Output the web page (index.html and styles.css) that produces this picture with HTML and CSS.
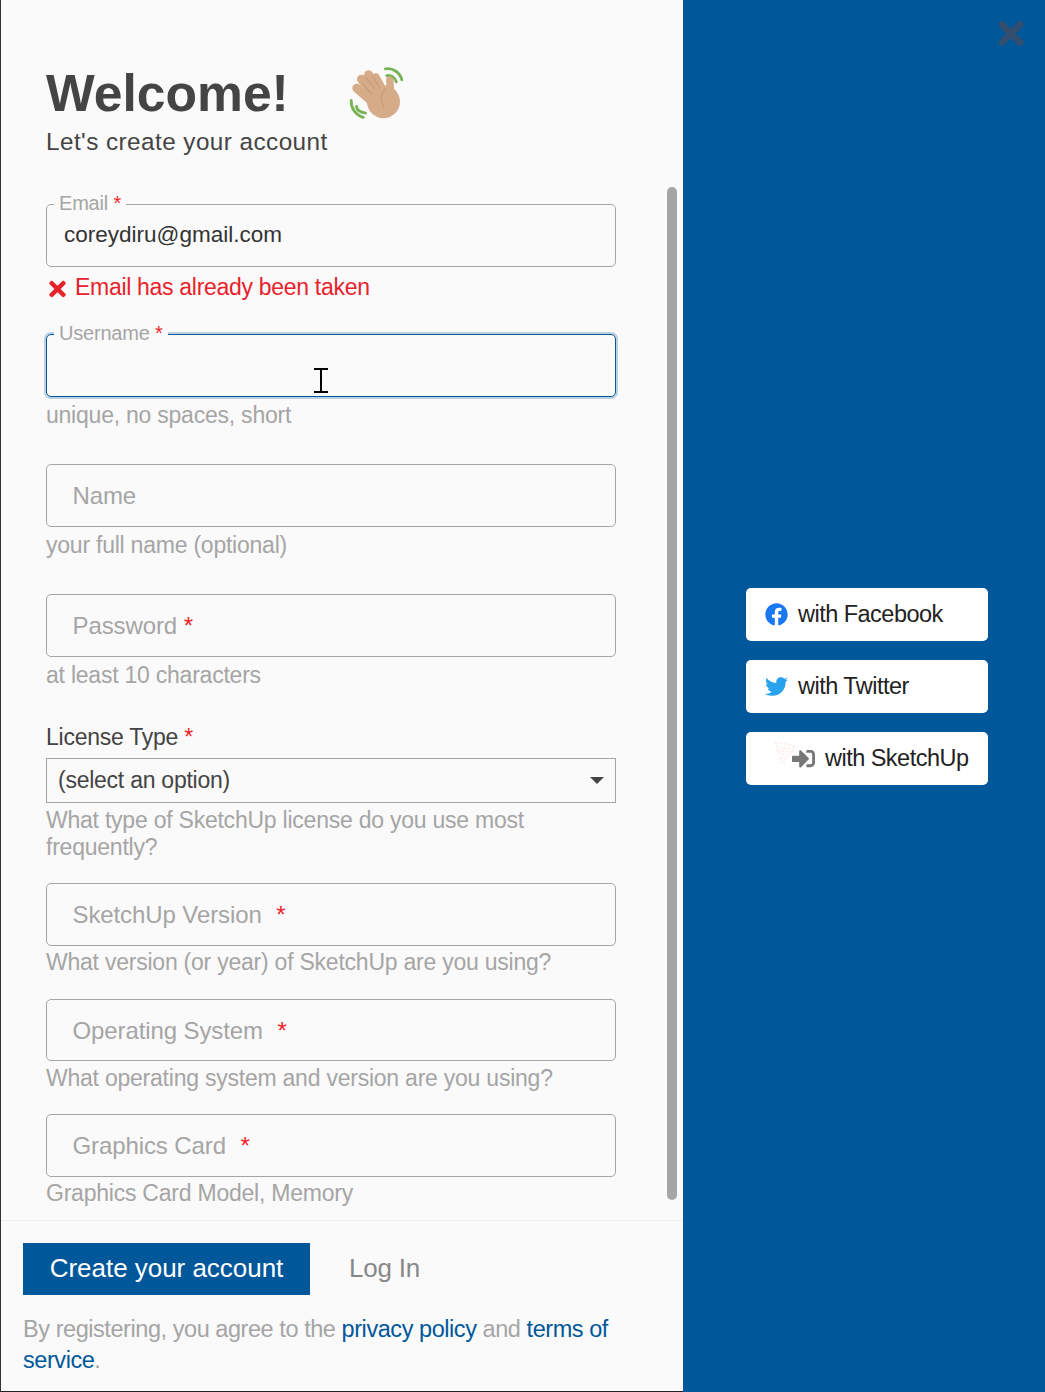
FILE: index.html
```html
<!DOCTYPE html>
<html lang="en">
<head>
<meta charset="utf-8">
<title>Create your account</title>
<link rel="stylesheet" href="styles.css">
</head>
<body>
<div class="modal">
  <section class="left">
    <div class="scroll">
      <div class="head">
        <h1 class="title">Welcome!</h1>
        <svg class="wave" viewBox="0 0 36 36" aria-hidden="true">
          <g fill="none" stroke="#77b255" stroke-width="1.900" stroke-linecap="round">
            <path d="M1.500 23c-.5 4.500 2.500 9.500 8 11.200"/>
            <path d="M5 27c.2 2 1.800 3.800 6 4.400"/>
            <path d="M24.300 1.900c4.800-.9 9.500 2.200 11 7.300"/>
            <path d="M25.200 6.400c2.900-.5 5.300 1.200 6.300 4.200"/>
          </g>
          <g fill="none" stroke="#d5ab88" stroke-linecap="round">
            <path stroke-width="6" d="M17 25L5.200 14.800"/>
            <path stroke-width="6" d="M18 21L8.300 8.800"/>
            <path stroke-width="6" d="M20 19L13 5.800"/>
            <path stroke-width="5.400" d="M23 17L17.800 7.500"/>
            <path stroke-width="5" d="M28 22L27.200 9.500"/>
          </g>
          <circle cx="23" cy="23.800" r="11" fill="#d5ab88"/>
          <g fill="none" stroke="#c49a78" stroke-width=".7" stroke-linecap="round">
            <path d="M24.500 15.500c-3 1.500-4 6.500-1.200 12"/>
            <path d="M8.800 11.500l6 7M11.500 7.800l5.500 7.400M15.800 6.500l4.500 8"/>
          </g>
        </svg>
      </div>
      <p class="subtitle">Let's create your account</p>

      <div class="group group-email">
        <div class="field">
          <label class="legend">Email <span class="req">*</span></label>
          <span class="value">coreydiru@gmail.com</span>
        </div>
        <p class="error">
          <svg class="error-icon" viewBox="0 0 352 512" aria-hidden="true"><path fill="#e8222b" d="M242.720 256l100.070-100.070c12.280-12.280 12.280-32.190 0-44.480l-22.240-22.240c-12.280-12.280-32.190-12.280-44.480 0L176 189.280 75.930 89.210c-12.280-12.280-32.190-12.280-44.480 0L9.210 111.450c-12.280 12.280-12.280 32.190 0 44.480L109.280 256 9.210 356.070c-12.280 12.280-12.280 32.190 0 44.480l22.240 22.240c12.280 12.280 32.200 12.280 44.480 0L176 322.720l100.070 100.070c12.280 12.280 32.200 12.280 44.480 0l22.240-22.240c12.280-12.280 12.280-32.190 0-44.480L242.720 256z"/></svg>
          <span>Email has already been taken</span>
        </p>
      </div>

      <div class="group">
        <div class="field focused">
          <label class="legend">Username <span class="req">*</span></label>
          <svg class="cursor" viewBox="0 0 14 25" aria-hidden="true"><path fill="none" stroke="#000" stroke-width="2" d="M0 1h14M7 1v23M0 24h14"/></svg>
        </div>
        <p class="hint">unique, no spaces, short</p>
      </div>

      <div class="group">
        <div class="field"><span class="placeholder">Name</span></div>
        <p class="hint">your full name (optional)</p>
      </div>

      <div class="group">
        <div class="field"><span class="placeholder">Password <span class="req">*</span></span></div>
        <p class="hint">at least 10 characters</p>
      </div>

      <div class="group-select">
        <p class="select-label">License Type <span class="req">*</span></p>
        <div class="select">
          <span>(select an option)</span>
          <span class="caret"></span>
        </div>
        <p class="hint hint-tight">What type of SketchUp license do you use most frequently?</p>
      </div>

      <div class="group group-short">
        <div class="field"><span class="placeholder">SketchUp Version <span class="req req-wide">*</span></span></div>
        <p class="hint hint-close">What version (or year) of SketchUp are you using?</p>
      </div>

      <div class="group group-short group-os">
        <div class="field field-os"><span class="placeholder">Operating System <span class="req req-wide">*</span></span></div>
        <p class="hint hint-close hint-os">What operating system and version are you using?</p>
      </div>

      <div class="group group-short">
        <div class="field"><span class="placeholder">Graphics Card <span class="req req-wide">*</span></span></div>
        <p class="hint hint-close">Graphics Card Model, Memory</p>
      </div>

      <div class="thumb"></div>
    </div>

    <footer class="foot">
      <div class="actions">
        <button class="primary" type="button">Create your account</button>
        <a class="login" href="#">Log In</a>
      </div>
      <p class="legal"><span>By registering, you agree to the</span> <a href="#">privacy policy</a> <span>and</span> <a href="#">terms of</a> <a href="#">service</a><span>.</span></p>
    </footer>
  </section>

  <aside class="right">
    <svg class="close" viewBox="0 0 352 512" aria-hidden="true"><path fill="#334f70" d="M242.720 256l100.070-100.070c12.280-12.280 12.280-32.190 0-44.480l-22.240-22.240c-12.280-12.280-32.190-12.280-44.480 0L176 189.280 75.930 89.210c-12.280-12.280-32.190-12.280-44.480 0L9.210 111.450c-12.280 12.280-12.280 32.190 0 44.480L109.280 256 9.210 356.070c-12.280 12.280-12.280 32.190 0 44.480l22.240 22.240c12.280 12.280 32.200 12.280 44.480 0L176 322.720l100.070 100.070c12.280 12.280 32.200 12.280 44.480 0l22.240-22.240c12.280-12.280 12.280-32.190 0-44.480L242.720 256z"/></svg>
    <div class="socials">
      <button class="social" type="button">
        <svg class="social-icon" viewBox="0 0 512 512" aria-hidden="true"><path fill="#1877f2" d="M504 256C504 119 393 8 256 8S8 119 8 256c0 123.780 90.690 226.380 209.250 245V327.690h-63V256h63v-54.640c0-62.150 37-96.480 93.670-96.480 27.140 0 55.520 4.840 55.520 4.840v61h-31.280c-30.800 0-40.410 19.120-40.410 38.730V256h68.780l-11 71.690h-57.780V501C413.310 482.380 504 379.780 504 256z"/></svg>
        <span>with Facebook</span>
      </button>
      <button class="social" type="button">
        <svg class="social-icon" viewBox="0 0 512 512" aria-hidden="true"><path fill="#2aa3ef" d="M459.370 151.716c.325 4.548.325 9.097.325 13.645 0 138.720-105.583 298.558-298.558 298.558-59.452 0-114.680-17.219-161.137-47.106 8.447.974 16.568 1.299 25.340 1.299 49.055 0 94.213-16.568 130.274-44.832-46.132-.975-84.792-31.188-98.112-72.772 6.498.974 12.995 1.624 19.818 1.624 9.421 0 18.843-1.300 27.614-3.573-48.081-9.747-84.143-51.980-84.143-102.985v-1.299c13.969 7.797 30.214 12.670 47.431 13.319-28.264-18.843-46.781-51.005-46.781-87.391 0-19.492 5.197-37.360 14.294-52.954 51.655 63.675 129.300 105.258 216.365 109.807-1.624-7.797-2.599-15.918-2.599-24.040 0-57.828 46.782-104.934 104.934-104.934 30.213 0 57.502 12.670 76.670 33.137 23.715-4.548 46.456-13.320 66.599-25.340-7.798 24.366-24.366 44.833-46.132 57.827 21.117-2.273 41.584-8.122 60.426-16.243-14.292 20.791-32.161 39.308-52.628 54.253z"/></svg>
        <span>with Twitter</span>
      </button>
      <button class="social social-su" type="button">
        <svg class="su-ghost" viewBox="0 0 26 26" aria-hidden="true"><path fill="none" stroke="#fdeeee" stroke-width="1.500" stroke-dasharray="3 1.500" d="M2 3l12 1 9 3-9 2-10-2zM4 10l9 2 7-1-5 5-8-2zM7 17l6 2-2 5-4-3z"/></svg>
        <svg class="signin" viewBox="0 0 512 512" aria-hidden="true"><path fill="#777" d="M416 448h-84c-6.600 0-12-5.400-12-12v-40c0-6.600 5.400-12 12-12h84c17.700 0 32-14.300 32-32V160c0-17.700-14.300-32-32-32h-84c-6.600 0-12-5.400-12-12V76c0-6.600 5.400-12 12-12h84c53 0 96 43 96 96v192c0 53-43 96-96 96zm-47-201L201 79c-15-15-41-4.500-41 17v96H24c-13.300 0-24 10.700-24 24v96c0 13.300 10.700 24 24 24h136v96c0 21.500 26 32 41 17l168-168c9.300-9.400 9.300-24.600 0-34z"/></svg>
        <span>with SketchUp</span>
      </button>
    </div>
  </aside>
</div>
</body>
</html>
```

FILE: styles.css
```css
* { box-sizing: border-box; }
html, body { margin: 0; padding: 0; height: 100%; }
body { font-family: "Liberation Sans", Arial, sans-serif; background: #00579a; overflow: hidden; }
p, h1 { margin: 0; }

.modal { display: flex; width: 1045px; height: 1392px; }

.left {
  width: 683px;
  height: 1392px;
  display: flex;
  flex-direction: column;
  background: #fafafa;
  border-left: 1px solid #333;
  border-bottom: 1px solid #222;
}
.scroll { position: relative; height: 1221px; padding: 0 67px 0 45px; border-bottom: 1px solid #efefef; }

.head { display: flex; align-items: flex-start; height: 120px; padding-top: 66px; }
.title { font-size: 51.600px; line-height: 54px; font-weight: 700; color: #444; margin: 0 62px 0 0; }
.wave { width: 54px; height: 54px; margin: 0 0 0 -2px; flex: none; }
.subtitle { font-size: 24.300px; line-height: 30px; letter-spacing: 0.440px; color: #444; margin: 7px 0 0 0; }

.group { height: 130px; }
.group-email { margin-top: 47px; }
.group-short { height: 116px; }
.group-os { height: 115px; }

.field {
  position: relative;
  height: 63px;
  border: 1px solid #a5a5a5;
  border-radius: 5px;
}
.field-os { height: 62px; }
.field.focused {
  border-color: #00579a;
  box-shadow: 0 0 0 2px #b9cfe2;
}
.legend {
  position: absolute;
  left: 7px;
  top: -14px;
  padding: 0 5px;
  background: #fafafa;
  font-size: 20px;
  line-height: 24px;
  letter-spacing: -0.200px;
  color: #a5a5a5;
}
.req { color: #f01f2a; }
.req-wide { margin-left: 8px; }
.value { display: block; padding: 15px 0 0 17px; font-size: 22.500px; line-height: 29px; color: #333; }
.placeholder { display: block; padding: 16px 0 0 25.500px; font-size: 24px; line-height: 29px; letter-spacing: -0.100px; color: #a5a5a5; }
.cursor { position: absolute; left: 267px; top: 33px; width: 14px; height: 25px; }

.error { display: flex; align-items: center; gap: 9px; margin-top: 5px; font-size: 23px; line-height: 30px; letter-spacing: -0.300px; color: #e8222b; }
.error-icon { width: 17px; height: 24px; margin: 3px 0 0 3px; flex: none; }

.hint { font-size: 23px; line-height: 27px; letter-spacing: -0.230px; color: #a5a5a5; margin-top: 5px; }
.hint-close { margin-top: 3px; }
.hint-tight { margin-top: 4px; }
.hint-os { margin-top: 4px; }

.group-select { height: 159px; }
.select-label { font-size: 23px; line-height: 27px; letter-spacing: -0.250px; color: #444; }
.select {
  display: flex;
  align-items: center;
  justify-content: space-between;
  height: 45px;
  margin-top: 7px;
  padding: 0 11px 0 11px;
  border: 1px solid #a5a5a5;
  font-size: 23px;
  letter-spacing: -0.250px;
  color: #444;
}
.caret { width: 0; height: 0; border-left: 7px solid transparent; border-right: 7px solid transparent; border-top: 7px solid #444; }

.thumb {
  position: absolute;
  left: 666px;
  top: 187px;
  width: 10px;
  height: 1013px;
  border-radius: 5px;
  background: #a5a5a5;
}

.foot { flex: 1; padding: 22px 22px 0; }
.actions { display: flex; align-items: center; }
.primary {
  width: 287px;
  height: 52px;
  border: 0;
  padding: 0 0 2px;
  background: #00579a;
  color: #fff;
  font-family: inherit;
  font-size: 26px;
  letter-spacing: -0.030px;
}
.login { margin: -2px 0 0 39px; font-size: 26px; color: #888; text-decoration: none; letter-spacing: -0.200px; }
.legal { margin-top: 19px; font-size: 23.500px; line-height: 31px; letter-spacing: -0.440px; color: #a5a5a5; }
.legal a { color: #00579a; text-decoration: none; }

.right { position: relative; flex: 1; background: #00579a; display: flex; align-items: center; padding-left: 63px; }
.close { position: absolute; left: 315px; top: 15px; width: 26px; height: 37px; }
.socials { display: flex; flex-direction: column; gap: 19px; margin-top: -20px; }
.social {
  display: flex;
  align-items: center;
  position: relative;
  width: 242px;
  height: 53px;
  padding: 0 0 0 19px;
  border: 0;
  border-radius: 5px;
  background: #fff;
  font-family: inherit;
  font-size: 23.500px;
  letter-spacing: -0.520px;
  color: #222;
}
.social-icon { width: 23px; height: 23px; margin-right: 10px; flex: none; }
.social-su { padding-left: 46px; }
.su-ghost { position: absolute; left: 27px; top: 8px; width: 26px; height: 26px; }
.signin { width: 23px; height: 23px; margin-right: 10px; flex: none; }
```
